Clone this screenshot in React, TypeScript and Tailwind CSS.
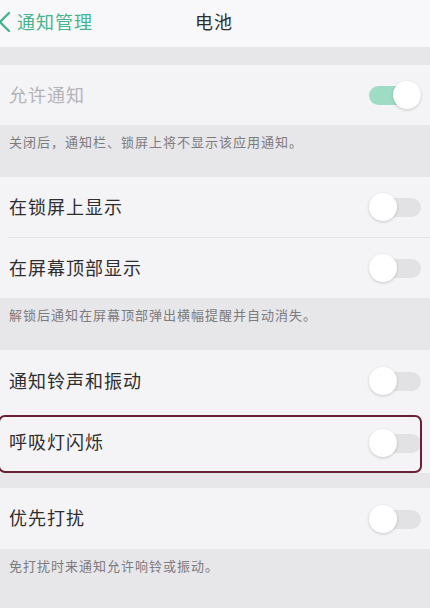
import React from 'react';

const font = { fontFamily: '"Noto Sans CJK SC", "Noto Sans", sans-serif' };

function Toggle({ on = false, dim = false }: { on?: boolean; dim?: boolean }) {
  return (
    <div className="relative w-[52px] h-[30px] shrink-0">
      <div
        className={`absolute left-0 right-0 top-[6px] h-[19px] rounded-full ${
          on ? (dim ? 'bg-[#9edcc6]' : 'bg-[#4cc196]') : 'bg-[#e2e1e4]'
        }`}
      />
      <div
        className={`absolute top-[1px] w-[28px] h-[28px] rounded-full bg-white shadow-[0_1px_3px_rgba(0,0,0,0.18)] ${
          on ? 'right-0' : 'left-0'
        }`}
      />
    </div>
  );
}

function Row({ label, on, disabled, h = 'h-[60px]' }: { label: string; on?: boolean; disabled?: boolean; h?: string }) {
  return (
    <div className={`flex items-center justify-between pl-[9px] pr-[9px] bg-[#f4f3f6] ${h}`}>
      <span className={`text-[18px] tracking-[1px] leading-[24px] mt-[-3px] ${disabled ? 'text-[#b4b3b6]' : 'text-[#2e2e2e]'}`}>
        {label}
      </span>
      <Toggle on={on} dim={disabled} />
    </div>
  );
}

function Note({ text, h = 'h-[52px]' }: { text: string; h?: string }) {
  return (
    <div className={`bg-[#e7e6e9] pl-[9px] pt-[7px] ${h}`}>
      <p className="text-[13px] tracking-[1px] text-[#7c7b7e] leading-[20px]">{text}</p>
    </div>
  );
}

export default function App() {
  return (
    <div className="w-[430px] h-[608px] overflow-hidden bg-[#e7e6e9]" style={font}>
      <div className="relative h-[47px] bg-[#f8f8fa] flex items-center pb-[4px]">
        <div className="flex items-center text-[#47b48f]">
          <svg width="14" height="22" viewBox="0 0 14 22" className="ml-[-2px]">
            <path d="M11 2 L2 11 L11 20" fill="none" stroke="currentColor" strokeWidth="2.4" strokeLinecap="round" strokeLinejoin="round" />
          </svg>
          <span className="ml-[5px] text-[18px] tracking-[1px]">通知管理</span>
        </div>
        <span className="absolute left-[195px] text-[18px] tracking-[1px] text-[#2e2e2e]">电池</span>
      </div>

      <div className="h-[18px]" />
      <Row label="允许通知" on disabled />
      <Note text="关闭后，通知栏、锁屏上将不显示该应用通知。" />

      <Row label="在锁屏上显示" />
      <div className="bg-[#f4f3f6] pl-[8px]">
        <div className="h-px bg-[#e4e3e6]" />
      </div>
      <Row label="在屏幕顶部显示" />
      <Note text="解锁后通知在屏幕顶部弹出横幅提醒并自动消失。" />

      <Row label="通知铃声和振动" h="h-[62px]" />
      <div className="relative">
        <Row label="呼吸灯闪烁" h="h-[61px]" />
        <div className="absolute left-[-2px] top-[3px] w-[424px] bottom-0 border-2 border-[#6b1f32] rounded-[7px]" />
      </div>

      <div className="h-[15px]" />
      <Row label="优先打扰" h="h-[61px]" />
      <Note text="免打扰时来通知允许响铃或振动。" h="h-[59px]" />
    </div>
  );
}
